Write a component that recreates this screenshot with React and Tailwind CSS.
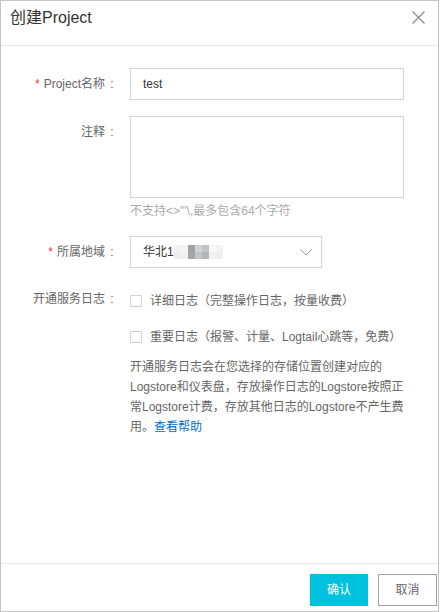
import React from "react";

const font = { fontFamily: '"Liberation Sans", "Noto Sans CJK SC", sans-serif' };

const Label = ({ children, required }) => (
  <div className="w-[118px] shrink-0 flex justify-end text-[12px] leading-[32px] text-[#666] whitespace-nowrap">
    {required && <span className="text-[#e4393c] mr-[4px]">*</span>}
    <span>{children}</span>
    <span className="inline-block w-[14px] text-center">:</span>
  </div>
);

const Checkbox = ({ label }) => (
  <label className="flex items-center h-[36px] cursor-pointer">
    <span className="w-[12px] h-[12px] border border-[#d3d3d3] bg-white shrink-0" />
    <span className="ml-[8px] text-[12px] text-[#666] whitespace-nowrap">{label}</span>
  </label>
);

const blur = [
  ["#f1f1f1", "#f4f4f4", "#a2a2a2", "#cfd3d5", "#c1c3c5", "#f6f6f6", "#f3f3f3"],
  ["#ececec", "#f0f0f0", "#a6a6a6", "#c3c6c8", "#b3b5b7", "#f1f1f1", "#efefef"],
];

const App = () => {
  return (
    <div
      style={font}
      className="w-[439px] h-[612px] border border-[#c4c4c4] bg-white flex flex-col"
    >
      {/* header */}
      <div className="h-[45px] shrink-0 border-b border-[#e5e5e5] flex items-start justify-between pl-[9px] pr-[13px] pt-[7px]">
        <h2 className="text-[16px] leading-[20px] text-[#333]">创建Project</h2>
        <button className="mt-[3px]">
          <svg width="13" height="13" viewBox="0 0 13 13" fill="none">
            <path d="M0.5 0.5L12.5 12.5M12.5 0.5L0.5 12.5" stroke="#8c8c8c" strokeWidth="1.3" />
          </svg>
        </button>
      </div>

      {/* body */}
      <div className="flex-1 pt-[22px]">
        <div className="flex">
          <Label required>Project名称</Label>
          <input
            defaultValue="test"
            className="ml-[11px] w-[274px] h-[32px] border border-[#d4d4d4] px-[12px] text-[12px] text-[#333] outline-none"
          />
        </div>

        <div className="flex mt-[16px]">
          <Label>注释</Label>
          <div className="ml-[11px]">
            <textarea className="block w-[274px] h-[82px] border border-[#d4d4d4] resize-none outline-none" />
            <p className="mt-[4px] text-[12px] leading-[18px] text-[#aaa]">
              不支持&lt;&gt;"'\,最多包含64个字符
            </p>
          </div>
        </div>

        <div className="flex mt-[16px]">
          <Label required>所属地域</Label>
          <div className="ml-[11px] w-[192px] h-[32px] border border-[#d4d4d4] flex items-center justify-between pl-[12px] pr-[9px]">
            <div className="flex items-center">
              <span className="text-[12px] text-[#333]">华北1</span>
              <div className="flex flex-col">
                {blur.map((row, i) => (
                  <div key={i} className="flex">
                    {row.map((c, j) => (
                      <span key={j} className="w-[7px] h-[7px]" style={{ background: c }} />
                    ))}
                  </div>
                ))}
              </div>
            </div>
            <svg width="12" height="7" viewBox="0 0 12 7" fill="none">
              <path d="M0.5 0.5L6 6L11.5 0.5" stroke="#999" strokeWidth="1" />
            </svg>
          </div>
        </div>

        <div className="flex mt-[15px]">
          <Label>开通服务日志</Label>
          <div className="ml-[11px]">
            <Checkbox label="详细日志（完整操作日志，按量收费）" />
            <Checkbox label="重要日志（报警、计量、Logtail心跳等，免费）" />
            <p className="mt-[2px] text-[12px] leading-[20px] text-[#666] whitespace-nowrap">
              开通服务日志会在您选择的存储位置创建对应的
              <br />
              Logstore和仪表盘，存放操作日志的Logstore按照正
              <br />
              常Logstore计费，存放其他日志的Logstore不产生费
              <br />
              用。
              <a href="#" className="text-[#0070cc]">
                查看帮助
              </a>
            </p>
          </div>
        </div>
      </div>

      {/* footer */}
      <div className="h-[48px] shrink-0 border-t border-[#e5e5e5] flex items-start justify-end gap-[10px] pt-[10px] pr-[1px]">
        <button className="w-[58px] h-[32px] bg-[#00c1de] text-white text-[12px]">确认</button>
        <button className="w-[59px] h-[32px] border border-[#a3a3a3] bg-white text-[#666] text-[12px]">
          取消
        </button>
      </div>
    </div>
  );
};

export default App;
